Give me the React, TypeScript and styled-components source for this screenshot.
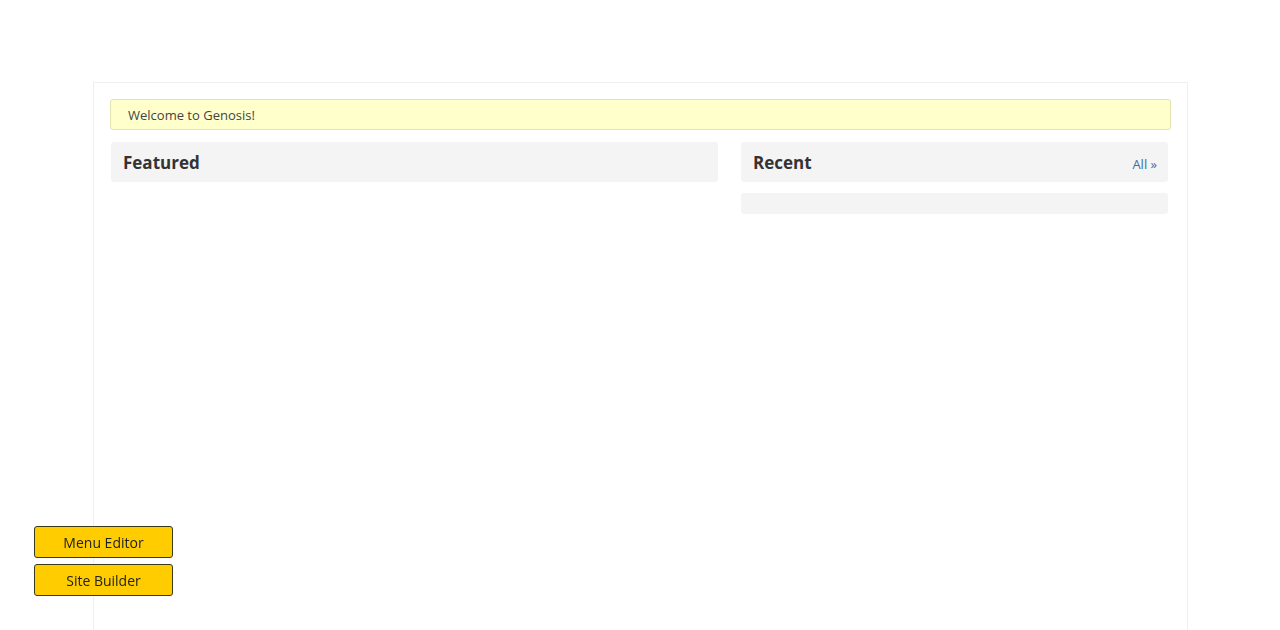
import React from 'react';
import styled, { createGlobalStyle } from 'styled-components';

const GlobalStyle = createGlobalStyle`
  html, body {
    margin: 0;
    padding: 0;
    background: #fff;
    font-family: "Open Sans", "Liberation Sans", sans-serif;
    color: #333;
  }
`;

const Page = styled.div`
  padding-top: 82px;
  height: 630px;
  box-sizing: border-box;
  overflow: hidden;
`;

const Container = styled.div`
  width: 1095px;
  margin-left: 93px;
  min-height: 600px;
  box-sizing: border-box;
  border: 1px solid #efefef;
  padding: 16px 16px 0 16px;
`;

const Alert = styled.div`
  background: #ffffcc;
  border: 1px solid #e3e3b4;
  border-radius: 3px;
  height: 31px;
  box-sizing: border-box;
  padding: 0 17px;
  display: flex;
  align-items: center;
  font-size: 13px;
  color: #444;
`;

const Columns = styled.div`
  display: grid;
  grid-template-columns: 607px 427px;
  column-gap: 23px;
  margin: 12px 0 0 1px;
`;

const Column = styled.div`
  display: flex;
  flex-direction: column;
  gap: 11px;
`;

const PanelHeader = styled.div`
  background: #f4f4f4;
  border-radius: 3px;
  height: 40px;
  box-sizing: border-box;
  padding: 0 11px 0 11px;
  display: flex;
  align-items: center;
  justify-content: space-between;
`;

const PanelTitle = styled.h2`
  margin: 0 0 0 1px;
  font-size: 17px;
  font-weight: 700;
  color: #333;
`;

const MoreLink = styled.a`
  font-size: 13px;
  color: #3b6ea5;
  text-decoration: none;
  margin-top: 3px;
`;

const EmptyList = styled.div`
  background: #f4f4f4;
  border-radius: 3px;
  height: 21px;
`;

const ToolBox = styled.div`
  position: fixed;
  left: 34px;
  top: 526px;
  display: flex;
  flex-direction: column;
  gap: 6px;
`;

const ToolButton = styled.button`
  width: 139px;
  height: 32px;
  background: #ffcc00;
  border: 1px solid #3a3a1a;
  border-radius: 3px;
  font-family: "Open Sans", "Liberation Sans", sans-serif;
  font-size: 14px;
  color: #222;
  cursor: pointer;
  padding: 0;
`;

const App: React.FC = () => {
  return (
    <>
      <GlobalStyle />
      <Page>
        <Container>
          <Alert>Welcome to Genosis!</Alert>
          <Columns>
            <Column>
              <PanelHeader>
                <PanelTitle>Featured</PanelTitle>
              </PanelHeader>
            </Column>
            <Column>
              <PanelHeader>
                <PanelTitle>Recent</PanelTitle>
                <MoreLink href="#">All »</MoreLink>
              </PanelHeader>
              <EmptyList />
            </Column>
          </Columns>
        </Container>
      </Page>
      <ToolBox>
        <ToolButton>Menu Editor</ToolButton>
        <ToolButton>Site Builder</ToolButton>
      </ToolBox>
    </>
  );
};

export default App;
